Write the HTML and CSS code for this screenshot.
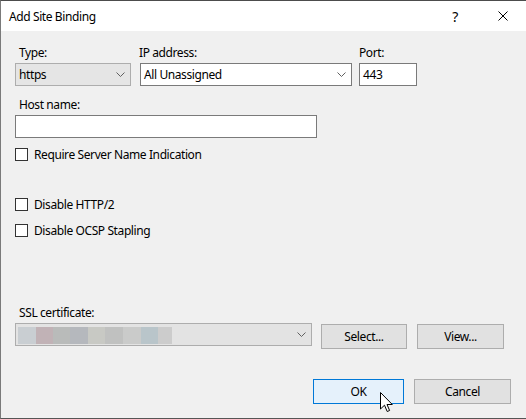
FILE: index.html
```html
<!DOCTYPE html>
<html>
<head>
<meta charset="utf-8">
<link rel="stylesheet" href="styles.css">
</head>
<body>
<div class="window">
  <div class="titlebar">
    <span class="title">Add Site Binding</span>
    <span class="capbtn help">?</span>
    <span class="capbtn close">
      <svg width="10" height="10" viewBox="0 0 10 10"><path d="M0.5 0.5 L9.5 9.5 M9.5 0.5 L0.5 9.5" stroke="#000" stroke-width="1" fill="none"/></svg>
    </span>
  </div>
  <div class="content">
    <div class="row1">
      <div class="field type">
        <div class="lbl ind">Type:</div>
        <div class="combo gray"><span class="val">https</span><svg class="chev" width="9" height="5" viewBox="0 0 9 5"><path d="M0.5 0.5 L4.5 4.5 L8.5 0.5" stroke="#606060" fill="none"/></svg></div>
      </div>
      <div class="field ip">
        <div class="lbl">IP address:</div>
        <div class="combo white"><span class="val">All Unassigned</span><svg class="chev" width="9" height="5" viewBox="0 0 9 5"><path d="M0.5 0.5 L4.5 4.5 L8.5 0.5" stroke="#606060" fill="none"/></svg></div>
      </div>
      <div class="field port">
        <div class="lbl">Port:</div>
        <div class="textbox"><span class="val">443</span></div>
      </div>
    </div>
    <div class="field host">
      <div class="lbl ind">Host name:</div>
      <div class="textbox wide"></div>
    </div>
    <div class="check sni"><span class="box"></span><span>Require Server Name Indication</span></div>
    <div class="check http2"><span class="box"></span><span>Disable HTTP/2</span></div>
    <div class="check ocsp"><span class="box"></span><span>Disable OCSP Stapling</span></div>
    <div class="field ssl">
      <div class="lbl ind">SSL certificate:</div>
      <div class="sslrow">
        <div class="combo disabled">
          <div class="cells">
            <span class="cell c1"></span><span class="cell c2"></span><span class="cell c3"></span><span class="cell c4"></span><span class="cell c5"></span><span class="cell c6"></span><span class="cell c7"></span><span class="cell c8"></span><span class="cell c9"></span>
          </div>
          <svg class="chev" width="9" height="5" viewBox="0 0 9 5"><path d="M0.5 0.5 L4.5 4.5 L8.5 0.5" stroke="#606060" fill="none"/></svg>
        </div>
        <div class="btn select">Select...</div>
        <div class="btn view">View...</div>
      </div>
    </div>
    <div class="actions">
      <div class="btn ok">OK</div>
      <div class="btn cancel">Cancel</div>
    </div>
  </div>
  <svg class="cursor" width="14" height="22" viewBox="0 0 14 22">
    <path d="M0.5 0.5 L0.5 17 L4.5 13.2 L7.2 19.5 L9.6 18.5 L7 12.5 L12.3 12.5 Z" fill="#fff" stroke="#000" stroke-width="1" stroke-linejoin="miter"/>
  </svg>
</div>
</body>
</html>
```

FILE: styles.css
```css
html, body {
  margin: 0;
  padding: 0;
}
body {
  width: 526px;
  height: 419px;
  overflow: hidden;
  font-family: "Noto Sans", "Open Sans", sans-serif;
  font-size: 12px;
  letter-spacing: -0.4px;
  color: #000;
}
.window {
  position: relative;
  width: 526px;
  height: 419px;
  box-sizing: border-box;
  border-top: 1px solid #4c4c4c;
  border-left: 1px solid #7a7a7a;
  border-bottom: 1px solid #555;
  background: #f0f0f0;
  display: flex;
  flex-direction: column;
}
.titlebar {
  height: 30px;
  flex: none;
  background: #fff;
  display: flex;
  align-items: center;
  padding-left: 8px;
}
.title {
  flex: 1;
  line-height: 15px;
}
.capbtn {
  width: 46px;
  height: 30px;
  display: flex;
  align-items: center;
  justify-content: center;
}
.help {
  font-size: 14px;
  padding-right: 4px;
  box-sizing: border-box;
}
.content {
  padding-left: 14px;
  display: flex;
  flex-direction: column;
}
.lbl {
  line-height: 15px;
  height: 15px;
}
.lbl.ind {
  padding-left: 4px;
}
.row1 {
  display: flex;
  margin-top: 14px;
}
.field {
  display: flex;
  flex-direction: column;
}
.field .lbl {
  margin-bottom: 3px;
}
.type {
  width: 116px;
}
.ip {
  margin-left: 9px;
  width: 212px;
}
.ip .lbl {
  margin-left: -1px;
}
.port {
  margin-left: 7px;
  width: 58px;
}
.combo, .textbox {
  box-sizing: border-box;
  height: 23px;
  display: flex;
  align-items: center;
  position: relative;
}
.combo.gray {
  background: #e5e5e5;
  border: 1px solid #adadad;
}
.combo.white, .textbox {
  background: #fff;
  border: 1px solid #7a7a7a;
}
.val {
  padding-left: 3px;
  flex: 1;
  line-height: 15px;
}
.chev {
  margin-right: 5px;
  flex: none;
}
.host {
  margin-top: 11px;
}
.textbox.wide {
  width: 302px;
}
.check {
  display: flex;
  align-items: center;
  height: 15px;
  line-height: 15px;
}
.box {
  width: 13px;
  height: 13px;
  box-sizing: border-box;
  border: 1px solid #333;
  background: #fff;
  margin-right: 6px;
}
.sni {
  margin-top: 9px;
}
.http2 {
  margin-top: 35px;
}
.ocsp {
  margin-top: 11px;
}
.ssl {
  margin-top: 67px;
}
.sslrow {
  display: flex;
  align-items: flex-start;
}
.combo.disabled {
  width: 297px;
  background: #e3e3e3;
  border: 1px solid #adadad;
  align-items: stretch;
}
.cells {
  flex: 1;
  display: flex;
  padding: 3px 0 1px 2px;
}
.combo.disabled .chev {
  align-self: center;
  margin-right: 5px;
}
.cell {
  display: block;
  height: 17px;
}
.c1 { width: 18px; background: #c9ced2; }
.c2 { width: 17px; background: #c1b2b6; }
.c3 { width: 17px; background: #b9bbba; }
.c4 { width: 18px; background: #b5b8bd; }
.c5 { width: 17px; background: #c8c9c4; }
.c6 { width: 18px; background: #c0c1c0; }
.c7 { width: 18px; background: #cacbca; }
.c8 { width: 17px; background: #b9c5ca; }
.c9 { width: 14px; background: #cccccc; }
.btn {
  box-sizing: border-box;
  height: 25px;
  border: 1px solid #adadad;
  background: #e1e1e1;
  display: flex;
  align-items: center;
  justify-content: center;
  line-height: 15px;
}
.select {
  width: 86px;
  margin-left: 9px;
  margin-top: 1px;
}
.view {
  width: 87px;
  margin-left: 10px;
  margin-top: 1px;
}
.actions {
  display: flex;
  justify-content: flex-end;
  padding-right: 15px;
  margin-top: 30px;
}
.ok {
  width: 91px;
  background: #e5f1fb;
  border-color: #0078d7;
}
.cancel {
  width: 97px;
  margin-left: 10px;
}
.cursor {
  position: absolute;
  left: 379px;
  top: 391px;
}
```
